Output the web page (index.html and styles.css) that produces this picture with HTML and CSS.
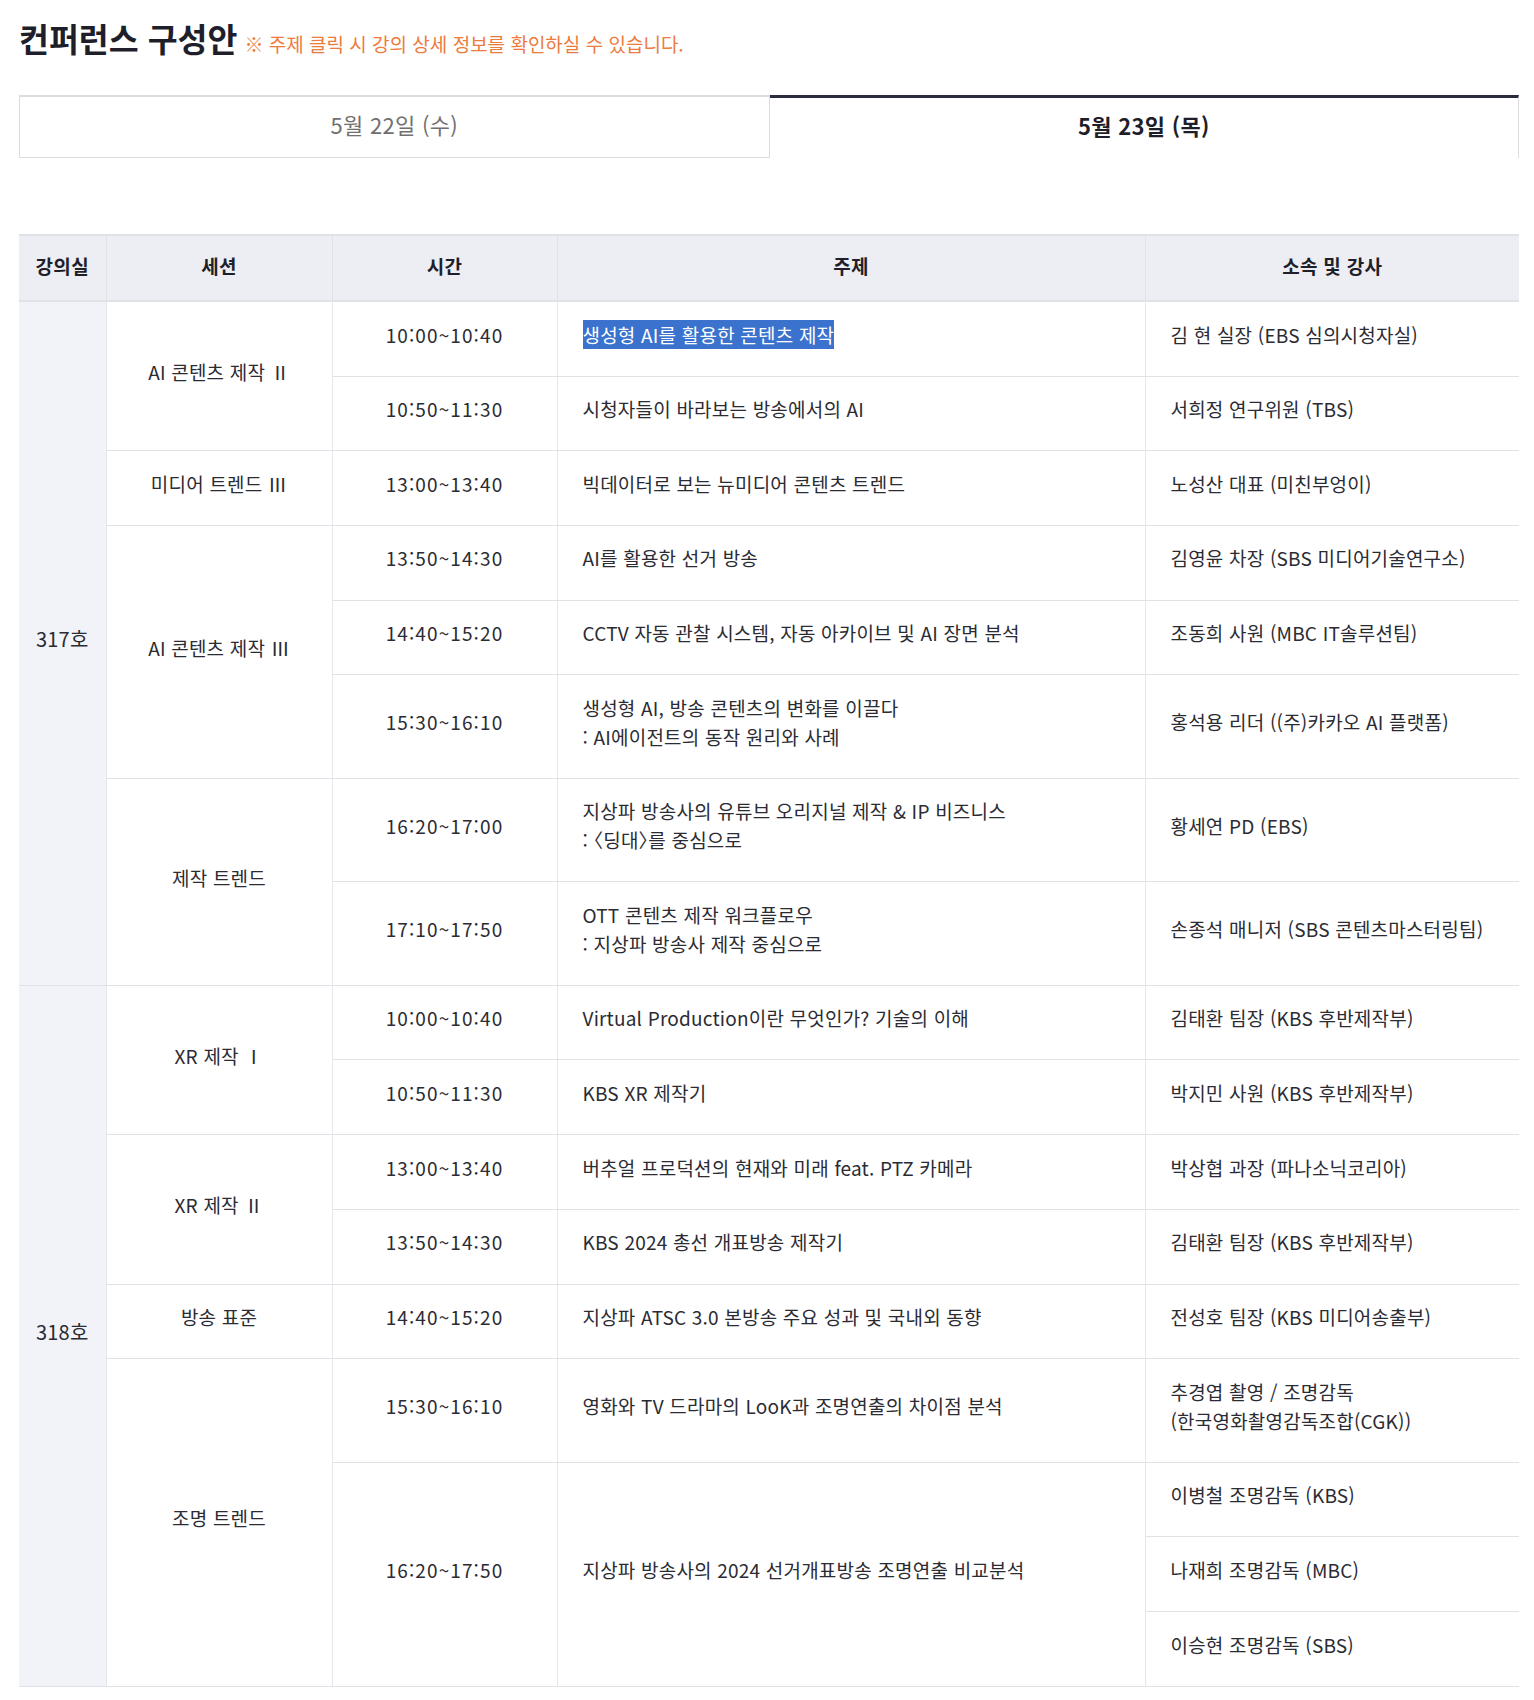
FILE: index.html
```html
<!DOCTYPE html>
<html lang="ko">
<head>
<meta charset="utf-8">
<title>컨퍼런스 구성안</title>
<link rel="stylesheet" href="styles.css">
</head>
<body>
<div class="page">
  <div class="heading">
    <h2 class="title">컨퍼런스 구성안</h2>
    <span class="note">※ 주제 클릭 시 강의 상세 정보를 확인하실 수 있습니다.</span>
  </div>

  <div class="tabs">
    <div class="tab">5월 22일 (수)</div>
    <div class="tab active">5월 23일 (목)</div>
  </div>

  <table class="schedule">
    <colgroup>
      <col class="c-room">
      <col class="c-session">
      <col class="c-time">
      <col class="c-topic">
      <col class="c-speaker">
    </colgroup>
    <thead>
      <tr>
        <th>강의실</th>
        <th>세션</th>
        <th>시간</th>
        <th>주제</th>
        <th>소속 및 강사</th>
      </tr>
    </thead>
    <tbody>
      <tr>
        <td class="room" rowspan="8">317호</td>
        <td class="session" rowspan="2">AI 콘텐츠 제작 Ⅱ</td>
        <td class="time">10:00~10:40</td>
        <td class="topic"><span class="selected">생성형 AI를 활용한 콘텐츠 제작</span></td>
        <td class="speaker">김 현 실장 (EBS 심의시청자실)</td>
      </tr>
      <tr>
        <td class="time">10:50~11:30</td>
        <td class="topic">시청자들이 바라보는 방송에서의 AI</td>
        <td class="speaker">서희정 연구위원 (TBS)</td>
      </tr>
      <tr>
        <td class="session">미디어 트렌드 Ⅲ</td>
        <td class="time">13:00~13:40</td>
        <td class="topic">빅데이터로 보는 뉴미디어 콘텐츠 트렌드</td>
        <td class="speaker">노성산 대표 (미친부엉이)</td>
      </tr>
      <tr>
        <td class="session" rowspan="3">AI 콘텐츠 제작 Ⅲ</td>
        <td class="time">13:50~14:30</td>
        <td class="topic">AI를 활용한 선거 방송</td>
        <td class="speaker">김영윤 차장 (SBS 미디어기술연구소)</td>
      </tr>
      <tr>
        <td class="time">14:40~15:20</td>
        <td class="topic">CCTV 자동 관찰 시스템, 자동 아카이브 및 AI 장면 분석</td>
        <td class="speaker">조동희 사원 (MBC IT솔루션팀)</td>
      </tr>
      <tr>
        <td class="time">15:30~16:10</td>
        <td class="topic">생성형 AI, 방송 콘텐츠의 변화를 이끌다<br>: AI에이전트의 동작 원리와 사례</td>
        <td class="speaker">홍석용 리더 ((주)카카오 AI 플랫폼)</td>
      </tr>
      <tr>
        <td class="session" rowspan="2">제작 트렌드</td>
        <td class="time">16:20~17:00</td>
        <td class="topic">지상파 방송사의 유튜브 오리지널 제작 &amp; IP 비즈니스<br>: <span class="half">〈딩대〉</span>를 중심으로</td>
        <td class="speaker">황세연 PD (EBS)</td>
      </tr>
      <tr>
        <td class="time">17:10~17:50</td>
        <td class="topic">OTT 콘텐츠 제작 워크플로우<br>: 지상파 방송사 제작 중심으로</td>
        <td class="speaker">손종석 매니저 (SBS 콘텐츠마스터링팀)</td>
      </tr>

      <tr>
        <td class="room" rowspan="9">318호</td>
        <td class="session" rowspan="2">XR 제작 Ⅰ</td>
        <td class="time">10:00~10:40</td>
        <td class="topic">Virtual Production이란 무엇인가? 기술의 이해</td>
        <td class="speaker">김태환 팀장 (KBS 후반제작부)</td>
      </tr>
      <tr>
        <td class="time">10:50~11:30</td>
        <td class="topic">KBS XR 제작기</td>
        <td class="speaker">박지민 사원 (KBS 후반제작부)</td>
      </tr>
      <tr>
        <td class="session" rowspan="2">XR 제작 Ⅱ</td>
        <td class="time">13:00~13:40</td>
        <td class="topic">버추얼 프로덕션의 현재와 미래 feat. PTZ 카메라</td>
        <td class="speaker">박상협 과장 (파나소닉코리아)</td>
      </tr>
      <tr>
        <td class="time">13:50~14:30</td>
        <td class="topic">KBS 2024 총선 개표방송 제작기</td>
        <td class="speaker">김태환 팀장 (KBS 후반제작부)</td>
      </tr>
      <tr>
        <td class="session">방송 표준</td>
        <td class="time">14:40~15:20</td>
        <td class="topic">지상파 ATSC 3.0 본방송 주요 성과 및 국내외 동향</td>
        <td class="speaker">전성호 팀장 (KBS 미디어송출부)</td>
      </tr>
      <tr>
        <td class="session" rowspan="4">조명 트렌드</td>
        <td class="time">15:30~16:10</td>
        <td class="topic">영화와 TV 드라마의 LooK과 조명연출의 차이점 분석</td>
        <td class="speaker">추경엽 촬영 / 조명감독<br>(한국영화촬영감독조합(CGK))</td>
      </tr>
      <tr>
        <td class="time" rowspan="3">16:20~17:50</td>
        <td class="topic" rowspan="3">지상파 방송사의 2024 선거개표방송 조명연출 비교분석</td>
        <td class="speaker">이병철 조명감독 (KBS)</td>
      </tr>
      <tr>
        <td class="speaker">나재희 조명감독 (MBC)</td>
      </tr>
      <tr>
        <td class="speaker">이승현 조명감독 (SBS)</td>
      </tr>
    </tbody>
  </table>
</div>
</body>
</html>
```

FILE: styles.css
```css
* {
  box-sizing: border-box;
}

html, body {
  margin: 0;
  padding: 0;
  background: #ffffff;
}

body {
  font-family: "Noto Sans CJK KR", "Noto Sans", sans-serif;
  color: #2b2b33;
}

.page {
  width: 1500px;
  margin-left: 19px;
  padding-top: 18px;
}

.heading {
  display: flex;
  align-items: baseline;
  gap: 7px;
  height: 40px;
}

.title {
  margin: 0;
  font-size: 32.5px;
  line-height: 40px;
  font-weight: 700;
  color: #1e1f2b;
}

.note {
  font-size: 19px;
  color: #ec7b3e;
}

.tabs {
  display: flex;
  margin-top: 37px;
}

.tab {
  flex: 1 1 0;
  height: 63px;
  display: flex;
  align-items: center;
  justify-content: center;
  padding-bottom: 6px;
  font-size: 22px;
  color: #707070;
  border: 1px solid #dcdcdc;
  border-top-width: 2px;
  background: #fff;
  letter-spacing: 0.3px;
}

.tab.active {
  border: none;
  border-top: 3px solid #2a2b3c;
  border-right: 1px solid #dcdcdc;
  color: #1e1f2b;
  font-weight: 700;
  padding-bottom: 7px;
}

.schedule {
  margin-top: 76px;
  width: 1500px;
  border-collapse: collapse;
  table-layout: fixed;
  font-size: 19px;
  line-height: 29px;
  letter-spacing: 0.2px;
}

.c-room { width: 87px; }
.c-session { width: 226px; }
.c-time { width: 225px; }
.c-topic { width: 588px; }
.c-speaker { width: 374px; }

.schedule th {
  height: 66px;
  background: #edeef3;
  font-weight: 700;
  color: #1e1f2b;
  border-top: 2px solid #e1e2e8;
  border-bottom: 2px solid #e1e2e8;
  border-left: 1px solid #e1e2e8;
  padding: 0 0 5px;
  text-align: center;
  letter-spacing: 0.3px;
}

.schedule th:first-child {
  border-left: none;
}

.schedule td {
  height: 74.7px;
  padding: 17.5px 25px 27px;
  border-bottom: 1px solid #e1e2e8;
  border-left: 1px solid #e6e7eb;
  vertical-align: middle;
  color: #2b2b33;
}

.schedule td.room {
  background: #f2f3f8;
  border-left: none;
  text-align: center;
  padding: 0 0 9px;
  font-size: 20px;
}

.schedule td.session,
.schedule td.time {
  text-align: center;
  padding-left: 10px;
  padding-right: 10px;
}

.schedule td.time {
  letter-spacing: 1.1px;
}

.schedule td.topic,
.schedule td.speaker {
  text-align: left;
}

.selected {
  background: #3a72cd;
  color: #ffffff;
  padding: 1px 0;
}

.half {
  font-feature-settings: "halt" 1;
}
```
